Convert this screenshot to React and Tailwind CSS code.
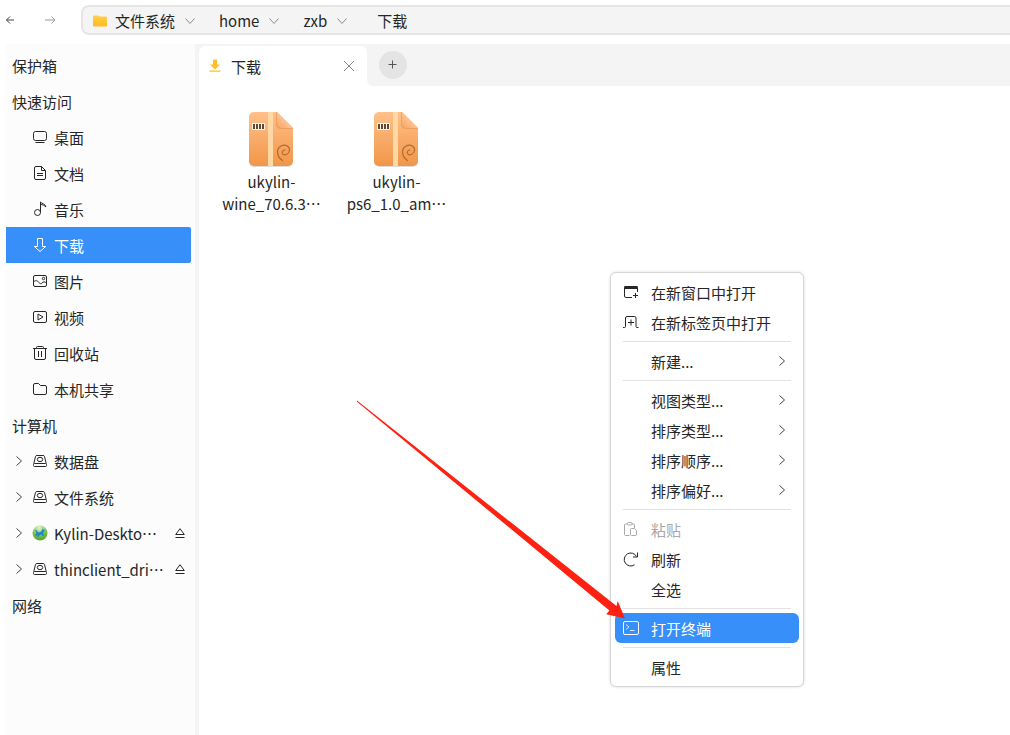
const places = [
  { label: "桌面", icon: "desktop" },
  { label: "文档", icon: "document" },
  { label: "音乐", icon: "music" },
  { label: "下载", icon: "download", active: true },
  { label: "图片", icon: "picture" },
  { label: "视频", icon: "video" },
  { label: "回收站", icon: "trash" },
  { label: "本机共享", icon: "folder" },
];

const devices = [
  { label: "数据盘", icon: "disk" },
  { label: "文件系统", icon: "disk" },
  { label: "Kylin-Deskto…", icon: "globe", eject: true },
  { label: "thinclient_dri…", icon: "disk", eject: true },
];

const files = [
  ["ukylin-", "wine_70.6.3…"],
  ["ukylin-", "ps6_1.0_am…"],
];

// null is a separator
const menuItems = [
  { label: "在新窗口中打开", icon: "newWindow" },
  { label: "在新标签页中打开", icon: "newTab" },
  null,
  { label: "新建...", sub: true },
  null,
  { label: "视图类型...", sub: true },
  { label: "排序类型...", sub: true },
  { label: "排序顺序...", sub: true },
  { label: "排序偏好...", sub: true },
  null,
  { label: "粘贴", icon: "paste", disabled: true },
  { label: "刷新", icon: "refresh" },
  { label: "全选" },
  null,
  { label: "打开终端", icon: "terminal", active: true },
  null,
  { label: "属性" },
];

const icons = {
  desktop: (
    <>
      <rect x="1.5" y="2.5" width="13" height="9" rx="2" />
      <path d="M3.5 13.5h9" />
    </>
  ),
  document: (
    <>
      <path d="M9.5 1.5H4A1.5 1.5 0 0 0 2.5 3v10A1.5 1.5 0 0 0 4 14.5h8a1.5 1.5 0 0 0 1.5-1.5V5.5L9.500 1.500V5.500h4" />
      <path d="M5 8.500h6M5 10.500h6" />
    </>
  ),
  music: (
    <>
      <circle cx="5.500" cy="11.500" r="3" />
      <path d="M8.500 11.500v-10.500c1.500 2 4.500 1.500 5.500 5-1.500-1.500-3.500-2.500-5.500-2.500" />
    </>
  ),
  download: <path d="M5.500 1.500h5v8h3.200L8 14.500 2.300 9.500h3.200z" strokeLinejoin="round" />,
  picture: (
    <>
      <rect x="1.5" y="2.5" width="13" height="11" rx="1.5" />
      <circle cx="11.500" cy="5.500" r="1.200" />
      <path d="M1.500 9c2-2 3.500-1.500 5 0s2.500 2.500 3.500 1 3-1.500 4.500 0" />
    </>
  ),
  video: (
    <>
      <rect x="1.5" y="2.5" width="13" height="11" rx="1.5" />
      <path d="M6 5v6l5-3z" />
    </>
  ),
  trash: (
    <>
      <path d="M1 3.500h14M4.500 3.500v-1A1 1 0 0 1 5.500 1.500h5a1 1 0 0 1 1 1v1M2.500 3.500V13A1.500 1.500 0 0 0 4 14.500h8a1.500 1.500 0 0 0 1.500-1.500V3.500" />
      <path d="M6.500 6v6M9.500 6v6" />
    </>
  ),
  folder: (
    <path d="M1.500 12V4A1.500 1.500 0 0 1 3 2.500h3.500l2 2H13A1.500 1.500 0 0 1 14.500 6v6a1.500 1.500 0 0 1-1.500 1.500H3A1.500 1.500 0 0 1 1.500 12z" />
  ),
  disk: (
    <>
      <path d="M1.800 10.500L3.500 3.500A1.500 1.500 0 0 1 5 2.500h6a1.500 1.500 0 0 1 1.500 1L14.200 10.500" />
      <rect x="1.500" y="10.500" width="13" height="3" rx="1" />
      <ellipse cx="8" cy="6.500" rx="2.700" ry="2.200" />
    </>
  ),
  newWindow: (
    <>
      <path d="M9 13.500H3A1.500 1.500 0 0 1 1.500 12V3.500A1 1 0 0 1 2.500 2.500h11a1 1 0 0 1 1 1V8" />
      <path d="M1.500 3.500h13" strokeWidth="3" />
      <path d="M10 11.500h5M12.500 9v5" />
    </>
  ),
  newTab: (
    <>
      <path d="M0 13.500h1.500A1 1 0 0 0 2.500 12.500V4A1.500 1.500 0 0 1 4 2.500h7.500A1.500 1.500 0 0 1 13 4v8.500a1 1 0 0 0 1 1h1.500" />
      <path d="M5 8.500h6M8 5.500v6" />
    </>
  ),
  paste: (
    <>
      <path d="M6.500 14.500h-4A1 1 0 0 1 1.500 13.500V4A1 1 0 0 1 2.500 3h2M9 3h1.500A1 1 0 0 1 11.500 4v3" />
      <rect x="4.500" y="1.500" width="4.500" height="2.500" rx="1" />
      <path d="M8.500 7.500h3l2 2v4a1 1 0 0 1-1 1h-4a1 1 0 0 1-1-1v-5a1 1 0 0 1 1-1z" />
    </>
  ),
  refresh: (
    <path d="M11.500 13.800A6.500 6.500 0 1 1 13.500 5.500M14.500 1.500v4.500H10" />
  ),
  terminal: (
    <>
      <rect x="0.500" y="1.500" width="15" height="13" rx="1.500" />
      <path d="M3 4.500l3 2.500-3 2.500M7 10.500h4.500" strokeWidth="0.800" />
    </>
  ),
};

function Icon({ name }) {
  if (name === "globe") {
    return (
      <svg className="size-4 shrink-0" viewBox="0 0 16 16">
        <defs>
          <radialGradient id="globe" cx="0.45" cy="0.15" r="0.95">
            <stop offset="0" stopColor="#e2f4d2" />
            <stop offset="0.5" stopColor="#7cc450" />
            <stop offset="1" stopColor="#4a9a2b" />
          </radialGradient>
        </defs>
        <circle cx="8" cy="8" r="7.500" fill="url(#globe)" />
        <path
          d="M3 5l2 0.500 1 2 2.500-0.500 1.500-1.500 0.500-2 1.200 1.200 1.300 0.800-1.500 1.500-0.300 2 1 1.500-1.500 0.500-1.200-1.500-1.500 0.300-1.500 2-1.500 0.200 0.500-2-1.500 1-1-1 1.500-2z"
          fill="#1c86c9"
        />
      </svg>
    );
  }
  return (
    <svg className="size-4 shrink-0" viewBox="0 0 16 16" fill="none" stroke="currentColor">
      {icons[name]}
    </svg>
  );
}

function ChevronRight() {
  return (
    <svg className="size-3 shrink-0" viewBox="0 0 12 12" fill="none" stroke="#444">
      <path d="M3.500 1.500L8.500 6l-5 4.500" />
    </svg>
  );
}

function Crumb({ label, icon }) {
  return (
    <div className="mr-6 flex items-center gap-2.5">
      <a href="#" className="flex items-center gap-2">
        {icon}
        {label}
      </a>
      <button aria-label={`${label} 子目录`}>
        <svg className="h-2.5 w-2.5" viewBox="0 0 10 10" fill="none" stroke="#8c8c8c">
          <path d="M0.500 2.500L5 7.500l4.500-5" />
        </svg>
      </button>
    </div>
  );
}

function Header() {
  return (
    <header className="flex h-11 shrink-0 items-start pt-[5px]">
      <div className="flex h-[30px] flex-none basis-[81px] items-center gap-7 pl-1">
        <button aria-label="后退">
          <svg className="h-3 w-3" viewBox="0 0 12 12" fill="none" stroke="#444">
            <path d="M2.500 6H10M6 2.500L2.500 6 6 9.500" />
          </svg>
        </button>
        <button aria-label="前进">
          <svg className="h-3 w-3" viewBox="0 0 12 12" fill="none" stroke="#999">
            <path d="M1 6h10M7.500 2.500L11 6 7.500 9.500" />
          </svg>
        </button>
      </div>
      <nav className="flex h-[30px] flex-1 items-center rounded-l-lg border-2 border-r-0 border-[#e6e6e6] bg-[#f4f4f4] pt-px pl-2.5">
        <Crumb
          label="文件系统"
          icon={
            <svg className="h-3 w-3.5" viewBox="0 0 14 12">
              <defs>
                <linearGradient id="folder" x1="0" y1="0" x2="0" y2="1">
                  <stop offset="0" stopColor="#ffd04a" />
                  <stop offset="1" stopColor="#ffb91f" />
                </linearGradient>
              </defs>
              <path d="M0 1.500A1 1 0 0 1 1 0.500h4.500l1 1H13a1 1 0 0 1 1 1V10.500a1 1 0 0 1-1 1H1a1 1 0 0 1-1-1z" fill="url(#folder)" />
            </svg>
          }
        />
        <Crumb label="home" />
        <Crumb label="zxb" />
        <a href="#" className="pl-1.5">下载</a>
      </nav>
    </header>
  );
}

function SideRow({ item, expandable }) {
  return (
    <li className={`mr-1 flex h-9 items-center rounded-r-xs px-1.5 ${item.active ? "bg-[#3790fa] text-white" : ""}`}>
      <button className="flex items-center">
        <span className="flex w-5 pl-px">{expandable && <ChevronRight />}</span>
        <Icon name={item.icon} />
        <span className="ml-1.5 pt-0.5">{item.label}</span>
      </button>
      {item.eject && (
        <button className="ml-auto" aria-label="弹出">
          <svg className="size-2.5" viewBox="0 0 10 10" fill="none" stroke="currentColor">
            <path d="M5 0.700L9.300 6.500H0.700zM0.500 9.500h9" />
          </svg>
        </button>
      )}
    </li>
  );
}

function Sidebar() {
  const heading = "flex h-9 items-center px-1.5 pt-px";
  return (
    <aside className="ml-1.5 w-[189px] shrink-0 bg-[#fcfcfc] pt-[3px]">
      <h2 className={heading}>保护箱</h2>
      <h2 className={heading}>快速访问</h2>
      <ul>
        {places.map((p) => (
          <SideRow key={p.label} item={p} />
        ))}
      </ul>
      <h2 className={heading}>计算机</h2>
      <ul>
        {devices.map((d) => (
          <SideRow key={d.label} item={d} expandable />
        ))}
      </ul>
      <h2 className={heading}>网络</h2>
    </aside>
  );
}

function Tabs() {
  return (
    <div className="flex h-[42px]">
      <div className="w-[168px] bg-[#f4f4f4] pt-0.5">
        <div className="flex h-10 items-center rounded-t-md bg-white pr-3 pl-2.5">
          <svg className="h-3.5 w-3" viewBox="0 0 12 14" fill="#ffbf26">
            <path d="M4 0.500h4v5h3L6 10.500 1 5.500h3zM0.500 11.500h11v1.200h-11z" />
          </svg>
          <span className="ml-2.5 pt-0.5">下载</span>
          <button className="ml-auto" aria-label="关闭">
            <svg className="size-3" viewBox="0 0 12 12" fill="none" stroke="#888">
              <path d="M1 1l10 10M11 1L1 11" />
            </svg>
          </button>
        </div>
      </div>
      <div className="flex flex-1 items-center rounded-bl-md bg-[#f4f4f4] pl-3">
        <button className="flex size-7 items-center justify-center rounded-full bg-[#e4e4e4]" aria-label="新建标签页">
          <svg className="size-2.5" viewBox="0 0 10 10" fill="none" stroke="#555">
            <path d="M0.500 4.500h8M4.500 0.500v8" />
          </svg>
        </button>
      </div>
    </div>
  );
}

function PackageIcon() {
  return (
    <svg className="h-14 w-12" viewBox="1 0 48 56">
      <defs>
        <linearGradient id="pkg" x1="0" y1="0" x2="0" y2="1">
          <stop offset="0" stopColor="#ffc08a" />
          <stop offset="1" stopColor="#f19648" />
        </linearGradient>
        <linearGradient id="fold" x1="0" y1="1" x2="1" y2="0">
          <stop offset="0" stopColor="#f7a567" />
          <stop offset="0.500" stopColor="#ffc291" />
          <stop offset="1" stopColor="#ffd2ac" />
        </linearGradient>
      </defs>
      <path d="M7 2h23l16 16v33a5 5 0 0 1-5 5H7a5 5 0 0 1-5-5V7a5 5 0 0 1 5-5z" fill="#dcdcdc" />
      <path d="M7 1h23l16 16v33a5 5 0 0 1-5 5H7a5 5 0 0 1-5-5V6a5 5 0 0 1 5-5z" fill="url(#pkg)" />
      <path d="M21 1h5v54h-5z" fill="#ffd8a3" />
      <path d="M29 1v13a5 5 0 0 0 5 4h12z" fill="#e88f4c" opacity="0.6" />
      <path d="M30 1v11a5 5 0 0 0 5 5h11z" fill="url(#fold)" />
      <path d="M5 12h13v7H5z" fill="#fff3e4" />
      <path d="M6 13h2v5H6zM9 13h2v5H9zM12 13h2v5h-2zM15 13h2v5h-2z" fill="#5f4a3a" />
      <path
        d="M35.500 49.500C30 46 28.500 38 34 35c5-2.500 9 1 8.500 4.500-0.500 4-5.500 5.500-7 3-0.800-2 0.500-3.500 2.500-3.500"
        fill="none"
        stroke="#b5692f"
        strokeWidth="1.200"
        strokeLinecap="round"
      />
    </svg>
  );
}

function ContextMenu() {
  return (
    <div
      role="menu"
      className="absolute top-[228px] left-[411px] w-[194px] rounded-md border border-[#d6d6d6] bg-white p-1 shadow-[0_0_3px_rgba(0,0,0,0.15)]"
    >
      {menuItems.map((item, i) =>
        item ? (
          <button
            key={i}
            role="menuitem"
            disabled={item.disabled}
            className={`flex h-[30px] w-full items-center rounded-md px-2 ${
              item.active ? "bg-[#3790fa] text-white" : item.disabled ? "text-[#a8a8a8]" : ""
            }`}
          >
            <span className="w-7">{item.icon && <Icon name={item.icon} />}</span>
            <span className="pt-px">{item.label}</span>
            {item.sub && (
              <span className="ml-auto pr-[3px]">
                <ChevronRight />
              </span>
            )}
          </button>
        ) : (
          <hr key={i} className="mx-2 my-1 border-[#e2e2e2]" />
        )
      )}
    </div>
  );
}

export default function App() {
  return (
    <div
      lang="zh-CN"
      className="flex min-h-screen flex-col overflow-hidden bg-white font-['Noto_Sans_CJK_SC',sans-serif] text-[15px] leading-[22px] text-[#262626]"
    >
      <Header />
      <div className="flex flex-1">
        <Sidebar />
        <div className="w-1 shrink-0 bg-[#f4f4f4]" />
        <main className="relative min-w-0 flex-1">
          <Tabs />
          <ul className="flex px-2.5 pt-[25px]">
            {files.map(([first, second]) => (
              <li key={second} className="flex w-[125px] flex-col items-center text-center">
                <PackageIcon />
                <span className="pt-1">
                  {first}
                  <br />
                  {second}
                </span>
              </li>
            ))}
          </ul>
          <ContextMenu />
          {/* pointer to the terminal entry */}
          <svg className="absolute top-[356px] left-[157px] h-[220px] w-[270px]" viewBox="0 0 270 220" fill="#ff2213">
            <path d="M1 0.500L260.500 206l1.200-5L269 218.500l-18.800-4.200 3.200-3.800L1 1.700z" />
          </svg>
        </main>
      </div>
    </div>
  );
}
